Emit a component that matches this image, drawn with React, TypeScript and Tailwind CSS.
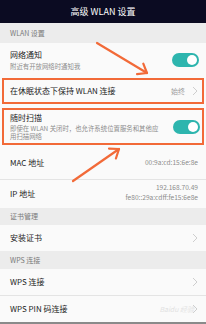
import React from 'react';

const font = "font-['Noto_Sans_CJK_SC','Noto_Sans',sans-serif]";

const Toggle = () => (
  <div className="w-[27px] h-[14px] rounded-full bg-[#2db5ae] flex items-center justify-end pr-[2px] shrink-0">
    <div className="w-[10px] h-[10px] rounded-full bg-white" />
  </div>
);

const Chevron = () => (
  <svg width="6" height="10" viewBox="0 0 6 10" className="shrink-0">
    <polyline points="1,1 5,5 1,9" fill="none" stroke="#c8c8c8" strokeWidth="0.9" />
  </svg>
);

const Section = ({ title, h }: { title: string; h: string }) => (
  <div className={`${h} bg-[#ececec] flex items-center pl-[10px] text-[7px] text-[#7a7a7a]`}>{title}</div>
);

// arrow drawn from (x1,y1) to tip (x2,y2)
const Arrow = ({ x1, y1, x2, y2 }: { x1: number; y1: number; x2: number; y2: number }) => {
  const a = Math.atan2(y2 - y1, x2 - x1);
  const len = 10;
  const spread = 0.65;
  const p1 = [x2 - len * Math.cos(a - spread), y2 - len * Math.sin(a - spread)];
  const p2 = [x2 - len * Math.cos(a + spread), y2 - len * Math.sin(a + spread)];
  return (
    <g stroke="#f26a38" strokeWidth="2.2" fill="none" strokeLinecap="round" strokeLinejoin="round">
      <line x1={x1} y1={y1} x2={x2} y2={y2} />
      <polyline points={`${p1[0]},${p1[1]} ${x2},${y2} ${p2[0]},${p2[1]}`} />
    </g>
  );
};

export default function App() {
  return (
    <div className={`${font} relative w-[206px] h-[324px] overflow-hidden bg-[#fafafa] flex flex-col`}>
      {/* title bar */}
      <div className="h-[23px] bg-[#0b0b22] flex items-center justify-center text-[9px] text-white">
        高级 WLAN 设置
      </div>

      <Section title="WLAN 设置" h="h-[20px]" />

      {/* network notify */}
      <div className="h-[33px] flex items-center pl-[10px] pr-[7px]">
        <div className="flex-1 flex flex-col">
          <span className="text-[8px] leading-[11px] text-[#1c1c1c]">网络通知</span>
          <span className="text-[6.4px] leading-[9px] text-[#8c8c8c] mt-[2px]">附近有开放网络时通知我</span>
        </div>
        <Toggle />
      </div>

      {/* keep wlan on sleep */}
      <div className="h-[30px] px-[2px] py-[2px]">
        <div className="h-full border-2 border-[#f26a38] flex items-center pl-[6px] pr-[4px]">
          <span className="flex-1 text-[8px] text-[#1c1c1c]">在休眠状态下保持 WLAN 连接</span>
          <span className="text-[7px] text-[#9a9a9a] mr-[7px]">始终</span>
          <Chevron />
        </div>
      </div>

      {/* scan always */}
      <div className="h-[41px] px-[2px] py-[2px]">
        <div className="h-full border-2 border-[#f26a38] flex items-center pl-[6px] pr-[2px]">
          <div className="flex-1 flex flex-col">
            <span className="text-[8px] leading-[11px] text-[#1c1c1c]">随时扫描</span>
            <span className="text-[6.4px] leading-[8px] text-[#8c8c8c] mt-[2px]">
              即使在 WLAN 关闭时，也允许系统位置服务和其他应
              <br />
              用扫描网络
            </span>
          </div>
          <Toggle />
        </div>
      </div>

      {/* mac */}
      <div className="h-[33px] flex items-center pl-[10px] pr-[8px] border-b border-[#e4e4e4]">
        <span className="flex-1 text-[8px] text-[#1c1c1c]">MAC 地址</span>
        <span className="text-[6.6px] text-[#8c8c8c]">00:9a:cd:15:6e:8e</span>
      </div>

      {/* ip */}
      <div className="h-[28px] flex items-center pl-[10px] pr-[8px]">
        <span className="flex-1 text-[8px] text-[#1c1c1c]">IP 地址</span>
        <div className="flex flex-col items-end text-[6.6px] leading-[10px] text-[#8c8c8c] -mt-[4px]">
          <span>192.168.70.49</span>
          <span>fe80::29a:cdff:fe15:6e8e</span>
        </div>
      </div>

      <Section title="证书管理" h="h-[17px]" />

      <div className="h-[26px] flex items-center pl-[10px] pr-[8px]">
        <span className="flex-1 text-[8px] text-[#1c1c1c]">安装证书</span>
        <Chevron />
      </div>

      <Section title="WPS 连接" h="h-[18px]" />

      <div className="h-[27px] flex items-center pl-[10px] pr-[8px] border-b border-[#e4e4e4]">
        <span className="flex-1 text-[8px] text-[#1c1c1c]">WPS 连接</span>
        <Chevron />
      </div>

      <div className="h-[26px] flex items-center pl-[10px] pr-[8px] relative">
        <span className="flex-1 text-[8px] text-[#1c1c1c]">WPS PIN 码连接</span>
        <span className="absolute right-[12px] top-[8px] text-[7px] text-[#e2e2e2] italic">Baidu 经验</span>
        <Chevron />
      </div>

      <div className="h-[2px] bg-[#8a8a8a]" />

      {/* annotation arrows */}
      <svg className="absolute inset-0 pointer-events-none" width="206" height="324" viewBox="0 0 206 324">
        <Arrow x1={97} y1={43} x2={147} y2={73} />
        <Arrow x1={73} y1={181} x2={119} y2={149} />
      </svg>
    </div>
  );
}
